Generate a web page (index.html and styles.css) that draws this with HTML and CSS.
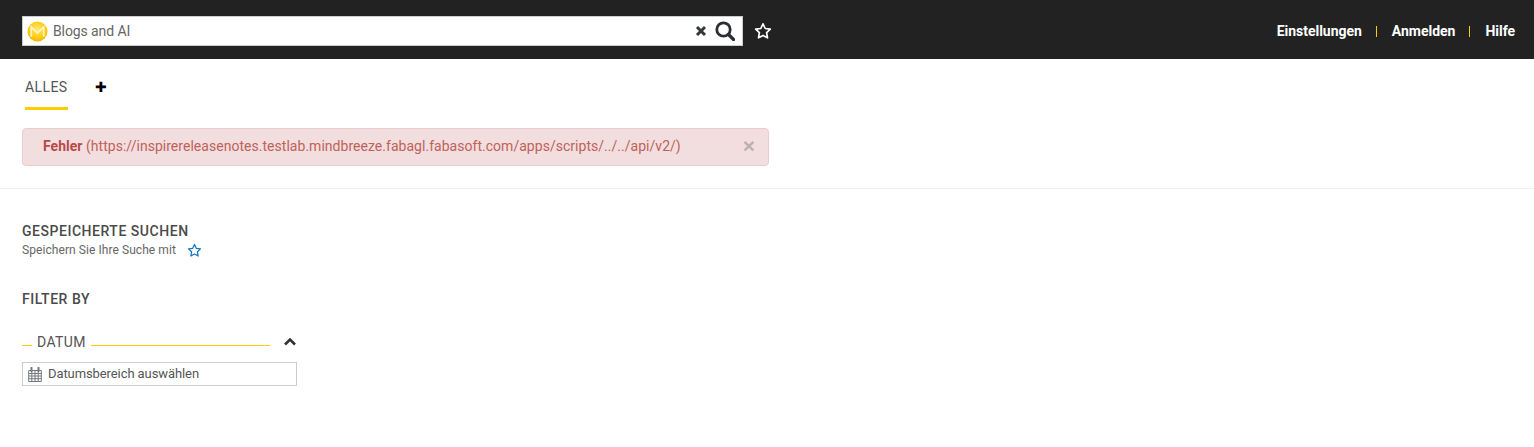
FILE: index.html
```html
<!DOCTYPE html>
<html lang="de">
<head>
<meta charset="utf-8">
<title>Suche</title>
<link rel="stylesheet" href="styles.css">
</head>
<body>
<header class="topbar">
  <div class="search">
    <svg class="logo" viewBox="0 0 22 22" width="21" height="21" aria-hidden="true">
      <defs><radialGradient id="lg" cx="50%" cy="40%" r="60%"><stop offset="0" stop-color="#ffe873"/><stop offset="0.7" stop-color="#fdcb12"/><stop offset="1" stop-color="#f0b400"/></radialGradient></defs>
      <circle cx="11" cy="11" r="10.5" fill="url(#lg)"/>
      <path d="M4.500 16.500V6.500l6.500 6 6.500-6v10" fill="none" stroke="#fff6c8" stroke-width="1.800"/>
    </svg>
    <span class="query">Blogs and AI</span>
    <svg class="clear" viewBox="0 0 12 12" width="12" height="12" aria-hidden="true"><path d="M2 2l8 8M10 2l-8 8" stroke="#33383f" stroke-width="3"/></svg>
    <svg class="magnifier" viewBox="0 0 20 20" width="20" height="20" aria-hidden="true"><circle cx="8.500" cy="8.500" r="6.700" fill="none" stroke="#2b2f33" stroke-width="2.800"/><path d="M13.500 13.500l5 5" stroke="#2b2f33" stroke-width="3.200" stroke-linecap="round"/></svg>
  </div>
  <svg class="star-top" viewBox="0 0 18 18" width="18" height="18" aria-hidden="true"><path d="M9 1.800l2.200 4.700 5.100.7-3.700 3.500.9 5.100L9 13.400l-4.500 2.400.9-5.100-3.700-3.500 5.100-.7z" fill="none" stroke="#fff" stroke-width="1.700" stroke-linejoin="round"/></svg>
  <nav class="topnav">
    <a>Einstellungen</a><span class="sep"></span><a>Anmelden</a><span class="sep"></span><a>Hilfe</a>
  </nav>
</header>

<div class="tabs">
  <div class="tab">ALLES</div>
  <div class="plus">✚</div>
</div>

<div class="alert">
  <span class="alert-text"><b>Fehler</b> (https://inspirereleasenotes.testlab.mindbreeze.fabagl.fabasoft.com/apps/scripts/../../api/v2/)</span>
  <span class="alert-close">×</span>
</div>

<hr class="divider">

<main class="side">
  <h2 class="heading">GESPEICHERTE SUCHEN</h2>
  <div class="saved-row">
    <span>Speichern Sie Ihre Suche mit</span>
    <svg viewBox="0 0 16 16" width="15" height="15" aria-hidden="true"><path d="M8 1.500l1.900 4.200 4.500.6-3.300 3.100.8 4.500L8 11.700l-3.900 2.200.8-4.500-3.300-3.100 4.500-.6z" fill="none" stroke="#1274c0" stroke-width="1.300" stroke-linejoin="round"/></svg>
  </div>
  <h2 class="heading filter">FILTER BY</h2>
  <div class="facet">
    <div class="facet-title"><span>DATUM</span></div>
    <svg class="chev" viewBox="0 0 14 10" width="14" height="10" aria-hidden="true"><path d="M2 7.500l5-5 5 5" fill="none" stroke="#2f3338" stroke-width="2.600"/></svg>
  </div>
  <div class="date">
    <svg viewBox="0 0 14 15" width="14" height="15" aria-hidden="true"><path d="M.7 3.500h12.600v11H.7zM.7 6.500h12.600M.7 9h12.600M.7 11.700h12.600M3.800 3.500v11M7 3.500v11M10.200 3.500v11" fill="none" stroke="#75797d" stroke-width="1"/><path d="M3.500 .8v3.500M10.500 .8v3.500" stroke="#75797d" stroke-width="2" stroke-linecap="round"/></svg>
    <span class="date-label">Datumsbereich auswählen</span>
  </div>
</main>
</body>
</html>
```

FILE: styles.css
```css
* { box-sizing: border-box; }
html, body { margin: 0; padding: 0; }
body {
  background: #fff;
  color: #555;
  font-family: Roboto, "Liberation Sans", sans-serif;
  font-size: 13px;
  height: 447px;
  overflow: hidden;
}
.topbar {
  height: 59px;
  background: #222;
  display: flex;
  align-items: center;
  padding: 3px 19px 0 22px;
}
.search {
  width: 721px;
  height: 30px;
  background: #fff;
  border: 1px solid #ccc;
  display: flex;
  align-items: center;
  padding: 0 5px 0 4px;
}
.logo { flex: none; }
.query {
  margin-left: 5px;
  flex: 1;
  font-size: 14px;
  letter-spacing: -0.1px;
  color: #666;
}
.clear { margin-right: 8px; }
.magnifier { margin-right: 2px; }
.star-top { margin-left: 11px; }
.topnav {
  margin-left: auto;
  display: flex;
  align-items: center;
  color: #fff;
  font-size: 14px;
  font-weight: 700;
  letter-spacing: -0.02px;
}
.sep {
  width: 1px;
  height: 11px;
  background: #fc0;
  margin: 0 15px 0 14px;
}
.tabs {
  display: flex;
  padding-left: 25px;
  height: 51px;
}
.tab {
  width: 43px;
  height: 51px;
  border-bottom: 3px solid #fc0;
  padding-top: 20px;
  font-size: 14px;
  line-height: 17px;
  letter-spacing: 0.4px;
  color: #555;
}
.plus {
  margin-left: 27px;
  padding-top: 20px;
  font-size: 14px;
  line-height: 16px;
  color: #000;
  font-family: "DejaVu Sans", sans-serif;
}
.alert {
  margin: 18px 0 0 22px;
  width: 747px;
  height: 38px;
  background: #f2dede;
  border: 1px solid #ebccd1;
  border-radius: 4px;
  color: #c0625a;
  display: flex;
  align-items: center;
  justify-content: space-between;
  padding: 0 13px 2px 20px;
  font-size: 14px;
  letter-spacing: 0.03px;
}
.alert b { color: #b94a48; font-weight: 700; }
.alert-close {
  color: #bdb0b0;
  font-size: 21px;
  font-weight: 700;
  line-height: 1;
  margin-bottom: 1px;
  font-family: "Liberation Sans", sans-serif;
}
.divider {
  margin: 22px 0 0;
  border: 0;
  border-top: 1px solid #eee;
}
.side { padding: 34px 0 0 22px; }
.heading {
  margin: 0;
  font-size: 14px;
  line-height: 16px;
  font-weight: 500;
  letter-spacing: 0.53px;
  color: #4a4a4a;
}
.saved-row {
  display: flex;
  align-items: center;
  gap: 11px;
  margin-top: 3px;
  height: 16px;
  font-size: 12px;
  letter-spacing: 0.07px;
  color: #666;
}
.filter { margin-top: 33px; }
.facet {
  width: 275px;
  margin-top: 27px;
  display: flex;
  align-items: center;
  justify-content: space-between;
  height: 17px;
}
.facet-title {
  width: 248px;
  height: 17px;
  background: linear-gradient(#fc0, #fc0) 0 11px / 100% 1px no-repeat;
}
.facet-title span {
  display: inline-block;
  margin-left: 10px;
  padding: 0 5px;
  background: #fff;
  font-size: 14px;
  line-height: 17px;
  letter-spacing: 0.4px;
  color: #555;
}
.chev { margin-bottom: 2px; }
.date {
  width: 275px;
  height: 24px;
  margin-top: 11px;
  border: 1px solid #ccc;
  display: flex;
  align-items: center;
  gap: 6px;
  padding-left: 5px;
  font-size: 13px;
  letter-spacing: -0.09px;
  color: #555;
}
.date-label { margin-bottom: 2px; }
```
